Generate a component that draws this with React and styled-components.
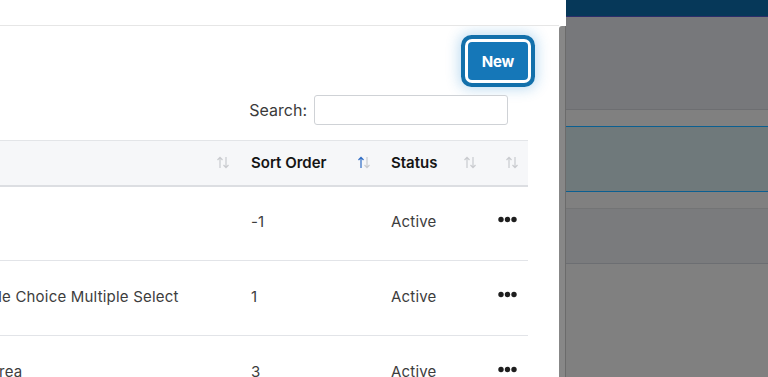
import React from "react";
import styled, { createGlobalStyle } from "styled-components";

const Global = createGlobalStyle`
  html, body { margin: 0; padding: 0; background: #fff; }
  body { font-family: "Inter", "Open Sans", sans-serif; }
  * { box-sizing: border-box; }
`;

const Page = styled.div`
  display: flex;
  width: 768px;
  height: 377px;
  overflow: hidden;
`;

const Modal = styled.div`
  width: 566px;
  display: flex;
  flex-direction: column;
  background: #fff;
`;

const ModalHeader = styled.div`
  height: 26px;
  flex: none;
  margin-right: 7px;
  border-bottom: 1px solid #e6e6e6;
`;

const ModalBody = styled.div`
  flex: 1;
  display: flex;
  min-height: 0;
`;

const Content = styled.div`
  flex: 1;
  min-width: 0;
  display: flex;
  flex-direction: column;
  align-items: flex-end;
  padding: 16px 31px 0 0;
  overflow: hidden;
  & > * { flex: none; }
`;

const Scrollbar = styled.div`
  width: 7px;
  flex: none;
  background: #878787;
  border-top-left-radius: 3px;
  border-right: 1px solid #6b6b6b;
`;

const NewButton = styled.button`
  width: 60px;
  height: 38px;
  padding: 0;
  border: none;
  border-radius: 4px;
  background: #1577b8;
  color: #fff;
  font-family: "Inter", sans-serif;
  font-weight: 700;
  font-size: 15px;
  letter-spacing: -0.2px;
  box-shadow: 0 0 0 3px #fff, 0 0 0 7px #1270ab, 0 0 13px 9px rgba(40, 140, 210, 0.3);
`;

const SearchRow = styled.label`
  margin: 15px 20px 0 0;
  display: flex;
  align-items: center;
  gap: 7px;
  font-size: 16px;
  color: #3a3a3a;
`;

const SearchInput = styled.input`
  width: 194px;
  height: 30px;
  border: 1px solid #cfd2d6;
  border-radius: 3px;
  outline: none;
`;

const TableWrap = styled.div`
  margin-top: 15px;
  width: 100%;
  display: flex;
  justify-content: flex-end;
`;

const Table = styled.table`
  flex: none;
  width: 589px;
  table-layout: fixed;
  border-collapse: collapse;
  font-size: 15px;
`;

const Th = styled.th`
  height: 45px;
  padding: 0 ${(p) => p.$pr || 7}px 0 14px;
  background: #f6f7f9;
  border-top: 1px solid #e3e5e8;
  border-bottom: 2px solid #dcdee2;
  text-align: left;
  font-weight: 600;
  color: #151515;
`;

const HeadInner = styled.div`
  display: flex;
  align-items: center;
  justify-content: space-between;
`;

const Td = styled.td`
  height: 75px;
  padding: 0 0 4px 14px;
  border-bottom: 1px solid #e2e4e8;
  color: #3d3d3d;
  letter-spacing: 0.2px;
  white-space: nowrap;
  overflow: hidden;
  vertical-align: middle;
`;

const ActionTd = styled(Td)`
  padding-left: 14px;
`;

const DotsSvg = styled.svg`
  display: block;
  margin-bottom: 3px;
`;

const Backdrop = styled.div`
  flex: 1;
  display: flex;
  flex-direction: column;
  background: #808080;
`;

const Band = styled.div`
  flex: none;
  height: ${(p) => p.$h}px;
  background: ${(p) => p.$bg};
  border-bottom: ${(p) => (p.$line ? `1px solid ${p.$line}` : "none")};
`;

const SortIcon = ({ active }) => (
  <svg width="14" height="13" viewBox="0 0 14 13" fill="none">
    <g stroke={active ? "#2d6bc4" : "#c9cbcf"} strokeWidth="1.2">
      <path d="M4 12V1.5M1.5 4L4 1.3L6.5 4" />
    </g>
    <g stroke="#c9cbcf" strokeWidth="1.2">
      <path d="M10 1v10.5M7.5 9L10 11.7L12.5 9" />
    </g>
  </svg>
);

const Dots = () => (
  <DotsSvg width="19" height="7" viewBox="0 0 19 7">
    <circle cx="3" cy="3.5" r="2.7" fill="#1e1e1e" />
    <circle cx="9.5" cy="3.5" r="2.7" fill="#1e1e1e" />
    <circle cx="16" cy="3.5" r="2.7" fill="#1e1e1e" />
  </DotsSvg>
);

const rows = [
  { name: "Text", order: "-1", status: "Active" },
  { name: "Multiple Choice Multiple Select", order: "1", status: "Active" },
  { name: "Text Area", order: "3", status: "Active" },
];

export default function App() {
  return (
    <Page>
      <Global />
      <Modal>
        <ModalHeader />
        <ModalBody>
          <Content>
            <NewButton>New</NewButton>
            <SearchRow>
              Search:
              <SearchInput type="text" />
            </SearchRow>
            <TableWrap>
              <Table>
                <colgroup>
                  <col style={{ width: 298 }} />
                  <col style={{ width: 140 }} />
                  <col style={{ width: 107 }} />
                  <col style={{ width: 44 }} />
                </colgroup>
                <thead>
                  <tr>
                    <Th>
                      <HeadInner>
                        <span>Name</span>
                        <SortIcon />
                      </HeadInner>
                    </Th>
                    <Th $pr={6}>
                      <HeadInner>
                        <span>Sort Order</span>
                        <SortIcon active />
                      </HeadInner>
                    </Th>
                    <Th>
                      <HeadInner>
                        <span>Status</span>
                        <SortIcon />
                      </HeadInner>
                    </Th>
                    <Th $pr={9}>
                      <HeadInner>
                        <span />
                        <SortIcon />
                      </HeadInner>
                    </Th>
                  </tr>
                </thead>
                <tbody>
                  {rows.map((r) => (
                    <tr key={r.name}>
                      <Td>{r.name}</Td>
                      <Td>{r.order}</Td>
                      <Td>{r.status}</Td>
                      <ActionTd>
                        <Dots />
                      </ActionTd>
                    </tr>
                  ))}
                </tbody>
              </Table>
            </TableWrap>
          </Content>
          <Scrollbar />
        </ModalBody>
      </Modal>
      <Backdrop>
        <Band $h={17} $bg="#063859" $line="#2c2e6a" />
        <Band $h={93} $bg="#77787b" $line="#6d6e71" />
        <Band $h={17} $bg="#808080" $line="#0b5f91" />
        <Band $h={65} $bg="#6f797b" $line="#0b5f91" />
        <Band $h={17} $bg="#808080" $line="#737475" />
        <Band $h={55} $bg="#7a7b7d" $line="#6c6e72" />
      </Backdrop>
    </Page>
  );
}
